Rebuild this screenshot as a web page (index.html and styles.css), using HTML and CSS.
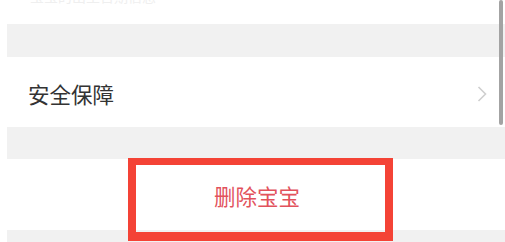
FILE: index.html
```html
<!DOCTYPE html>
<html lang="zh">
<head>
<meta charset="utf-8">
<link rel="stylesheet" href="styles.css">
</head>
<body>
<div class="page">
  <div class="row-top"><span class="ghost">宝宝的出生日期信息</span></div>
  <div class="gap"></div>
  <div class="row">
    <span class="label">安全保障</span>
    <svg class="chev" width="10" height="16" viewBox="0 0 10 16"><path d="M1.5 1 L8.5 8 L1.5 15" fill="none" stroke="#cfcfcf" stroke-width="1.6"/></svg>
  </div>
  <div class="gap gap2"></div>
  <div class="row-delete"><span class="del">删除宝宝</span></div>
  <div class="gap gap3"></div>
  <div class="mark"></div>
  <div class="scroll"></div>
</div>
</body>
</html>
```
FILE: styles.css
```css
html, body { margin: 0; padding: 0; background: #fff; }
.page {
  position: relative;
  width: 505px;
  height: 242px;
  overflow: hidden;
  display: flex;
  flex-direction: column;
  font-family: "Noto Sans CJK SC", "Noto Sans", sans-serif;
}
.row-top {
  height: 24px;
  padding-left: 30px;
  overflow: hidden;
}
.ghost {
  display: block;
  margin-top: -15px;
  font-size: 14px;
  line-height: 22px;
  color: #efefef;
}
.gap {
  height: 33px;
  margin-left: 7px;
  background: #f1f1f1;
}
.gap2 { height: 32px; }
.gap3 { height: 12px; flex: none; }
.row {
  height: 70px;
  display: flex;
  align-items: center;
  justify-content: space-between;
  padding-left: 28px;
  padding-right: 18px;
}
.label {
  font-size: 21.5px;
  color: #333;
  line-height: 1;
  margin-top: 4px;
}
.chev { margin-top: 4px; }
.row-delete {
  height: 71px;
  display: flex;
  align-items: center;
  justify-content: center;
}
.del {
  font-size: 21.5px;
  color: #e2525c;
  line-height: 1;
  margin-left: 9px;
  margin-top: 2px;
}
.mark {
  position: absolute;
  left: 128px;
  top: 158px;
  width: 249px;
  height: 67px;
  border: 8px solid #f44336;
  border-top-width: 7px;
  border-bottom-width: 9px;
}
.scroll {
  position: absolute;
  left: 499px;
  top: 0;
  width: 4px;
  height: 125px;
  background: #a3a3a3;
  border-radius: 2px;
}
```
